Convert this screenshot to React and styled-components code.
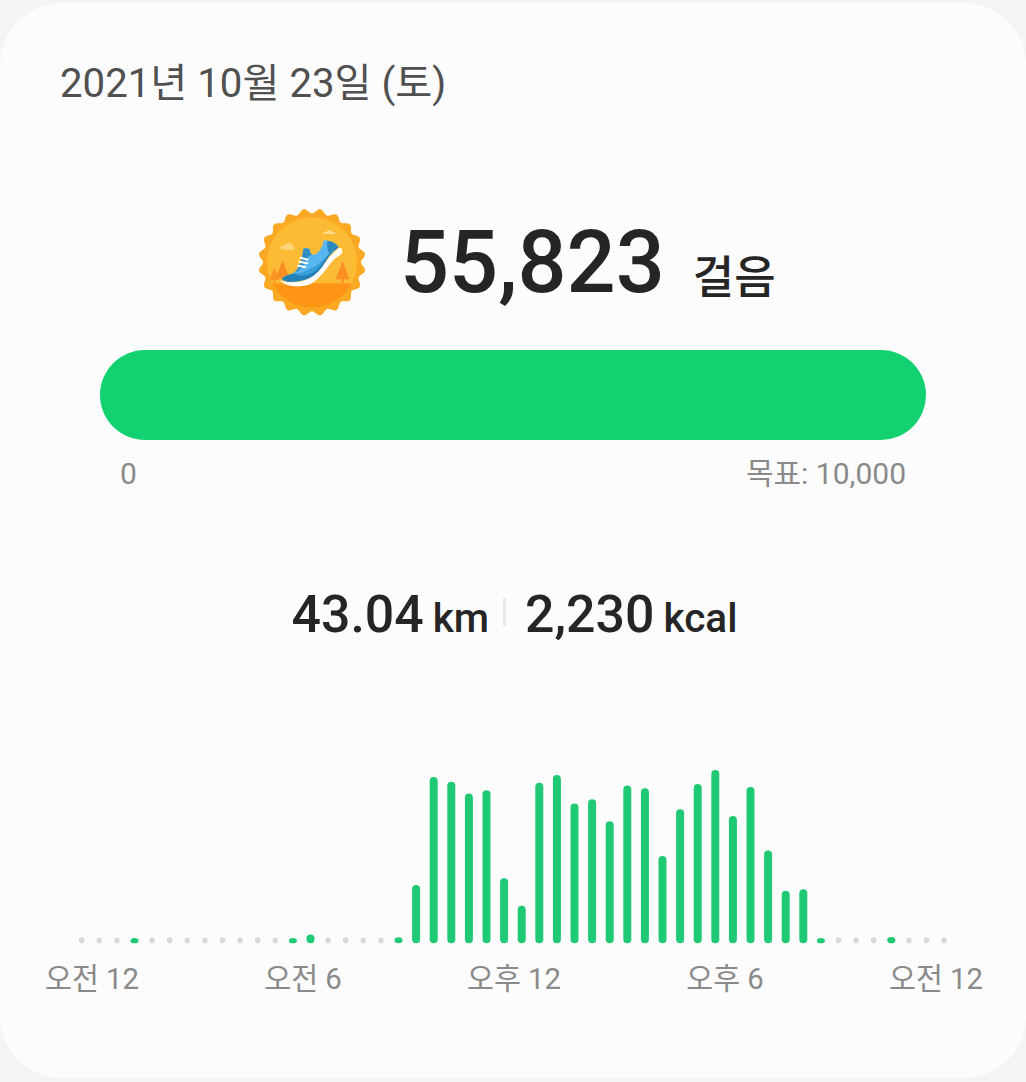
import React from 'react';
import styled, { createGlobalStyle } from 'styled-components';

const GlobalStyle = createGlobalStyle`
  * {
    box-sizing: border-box;
  }

  body {
    margin: 0;
    background: #f4f4f4;
    font-family: Roboto, 'Noto Sans CJK KR', sans-serif;
  }
`;

const Screen = styled.div`
  width: 1026px;
  height: 1082px;
  padding: 3px 0 4px;
  overflow: hidden;
`;

const Card = styled.main`
  display: flex;
  flex-direction: column;
  height: 1075px;
  padding-top: 57px;
  border-radius: 62px;
  background: #fcfcfc;
`;

const DateTitle = styled.h1`
  margin: 0 0 0 60px;
  font-size: 40.2px;
  line-height: 48px;
  font-weight: 400;
  color: #505050;
  white-space: nowrap;
`;

const StepsRow = styled.div`
  display: flex;
  align-items: center;
  height: 108px;
  margin-top: 100px;
  padding-left: 258px;
`;

const StepCount = styled.div`
  margin-left: 34px;
  padding-top: 2px;
  font-size: 86.4px;
  line-height: 108px;
  font-weight: 500;
  color: #252525;
  white-space: nowrap;
`;

const StepUnit = styled.span`
  margin-left: 28px;
  font-size: 45px;
  line-height: 1;
  vertical-align: -2px;
`;

const ProgressTrack = styled.div`
  height: 90px;
  margin: 34px 100px 0;
  border-radius: 45px;
  background: #13d170;
  overflow: hidden;
`;

const ProgressLabels = styled.div`
  display: flex;
  justify-content: space-between;
  margin: 16px 120px 0;
  font-size: 30px;
  line-height: 36px;
  color: #8a8a8a;
`;

const Stats = styled.div`
  display: flex;
  justify-content: center;
  height: 60px;
  margin-top: 93px;
  padding-left: 3px;
`;

const Stat = styled.div`
  font-size: 51.8px;
  line-height: 60px;
  font-weight: 500;
  color: #252525;
  white-space: nowrap;
`;

const StatUnit = styled.span`
  margin-left: 9px;
  font-size: 40.5px;
  line-height: 1;
`;

const Divider = styled.div`
  width: 3px;
  height: 28px;
  margin: 13px 19px 0 14px;
  background: #e8e8e8;
`;

const Chart = styled.svg`
  display: block;
  width: 1026px;
  height: 190px;
  margin-top: 115px;
`;

const HourLabels = styled.div`
  display: flex;
  justify-content: space-between;
  margin: 11px 42px 0 44px;
  font-size: 29.3px;
  line-height: 36px;
  color: #8a8a8a;
`;

const HourLabel = styled.span`
  width: 96px;
  text-align: center;
  white-space: nowrap;
`;

// Bar height for every half-hour slot, 0 is drawn as a grey dot
const slots = [
  0, 0, 0, 5.3, 0, 0, 0, 0, 0, 0, 0, 0, 5.3, 8.8, 0, 0, 0, 0, 6,
  58.3, 166.3, 161.5, 149.8, 153, 65, 37.5, 160.5, 168.2, 139.8, 144,
  122, 157.8, 155, 87.3, 134, 159.3, 173.3, 127.3, 156.2, 92.8, 52.5, 54,
  5.3, 0, 0, 0, 6.3, 0, 0, 0,
];

const hours = ['오전 12', '오전 6', '오후 12', '오후 6', '오전 12'];

const FIRST_X = 81.7;
const STEP_X = 17.6;
const BASE_Y = 183.3;

// Scalloped outline with 20 teeth
const badgeEdge = () => {
  const points = [];
  for (let i = 0; i < 360; i += 1) {
    const angle = (i * Math.PI) / 180;
    const r = 154 + 7 * Math.cos(20 * (angle - Math.PI / 20 + Math.PI / 2));
    points.push(`${(217 + r * Math.cos(angle)).toFixed(1)},${(203 + r * Math.sin(angle)).toFixed(1)}`);
  }
  return points.join(' ');
};

const Badge = () => (
  <svg width="108" height="108" viewBox="55 40 324 324">
    <defs>
      <clipPath id="badge-inner">
        <circle cx="217" cy="203" r="135" />
      </clipPath>
    </defs>
    <polygon points={badgeEdge()} fill="#fba822" />
    <g clipPath="url(#badge-inner)">
      <rect x="80" y="60" width="290" height="210" fill="#fbbb34" />
      <rect x="80" y="266" width="290" height="80" fill="#ff9416" />
      <path d="M104 220 L119 256 H107 V266 H101 V256 H88 Z" fill="#fb9528" />
      <path d="M129 196 L149 251 H132 V266 H126 V251 H108 Z" fill="#fb8f26" />
      <path d="M309 198 L329 254 H312 V266 H306 V254 H288 Z" fill="#fb8f26" />
    </g>
    <path d="M121 160 Q125 151 134 153 Q140 142 151 146 Q161 149 162 157 Q166 160 163 165 H136 Q125 165 121 160 Z" fill="#fdd57c" />
    <path d="M249 114 Q254 110 260 112 Q264 104 272 107 Q277 113 285 113 L288 118 H253 Z" fill="#fdd988" />
    <path d="M124 255 Q132 264 160 263 Q190 262 211 250 Q236 234 256 205 Q272 180 298 160 Q308 158 308 170 Q308 178 298 183 Q279 194 264 218 Q241 251 212 269 Q192 277 158 274 Q131 270 124 260 Z" fill="#fff" />
    <path d="M127 251 Q139 241 158 237 Q184 222 191 163 Q199 158 210 164 Q211 180 221 180 Q233 180 243 163 Q251 149 252 138 Q257 134 262 138 Q281 138 297 158 Q275 172 259 198 Q239 234 211 249 Q182 263 144 261 Q130 259 127 251 Z" fill="#58b7f0" />
    <path d="M127 251 Q140 241 158 237 Q180 240 207 226 Q240 211 262 185 Q277 166 293 155 L297 158 Q275 172 259 198 Q239 234 211 249 Q182 263 144 261 Q130 259 127 251 Z" fill="#2380b8" />
    <path d="M160 237 Q180 240 207 226 Q240 211 262 185 Q244 219 216 236 Q190 250 160 237 Z" fill="#3a9fd9" />
    <path d="M191 163 Q199 158 210 164 Q211 177 217 180 Q206 183 202 190 Q190 226 164 235 Q185 215 191 163 Z" fill="#2f8fc6" />
    <path d="M263 138 Q282 139 295 155 Q278 163 268 176 Q261 163 263 138 Z" fill="#2d88bd" />
    <path d="M183 189 L204 195 M179 201 L203 206 M175 213 L197 217" stroke="#fff" strokeWidth="6" strokeLinecap="round" />
  </svg>
);

export default function App() {
  return (
    <>
      <GlobalStyle />
      <Screen>
        <Card>
          <DateTitle>2021년 10월 23일 (토)</DateTitle>
          <StepsRow>
            <Badge />
            <StepCount>
              55,823<StepUnit>걸음</StepUnit>
            </StepCount>
          </StepsRow>
          <ProgressTrack />
          <ProgressLabels>
            <span>0</span>
            <span>목표: 10,000</span>
          </ProgressLabels>
          <Stats>
            <Stat>
              43.04<StatUnit>km</StatUnit>
            </Stat>
            <Divider />
            <Stat>
              2,230<StatUnit>kcal</StatUnit>
            </Stat>
          </Stats>
          <Chart viewBox="0 0 1026 190">
            {slots.map((height, i) => {
              const x = FIRST_X + i * STEP_X;
              if (!height) {
                return <circle key={i} cx={x} cy="180.4" r="2.8" fill="#d8d8d8" />;
              }
              return (
                <rect
                  key={i}
                  x={x - 4}
                  y={BASE_Y - height}
                  width="8"
                  height={height}
                  rx={4}
                  ry={Math.min(4, height / 2)}
                  fill="#20c973"
                />
              );
            })}
          </Chart>
          <HourLabels>
            {hours.map((label, i) => (
              <HourLabel key={i}>{label}</HourLabel>
            ))}
          </HourLabels>
        </Card>
      </Screen>
    </>
  );
}
